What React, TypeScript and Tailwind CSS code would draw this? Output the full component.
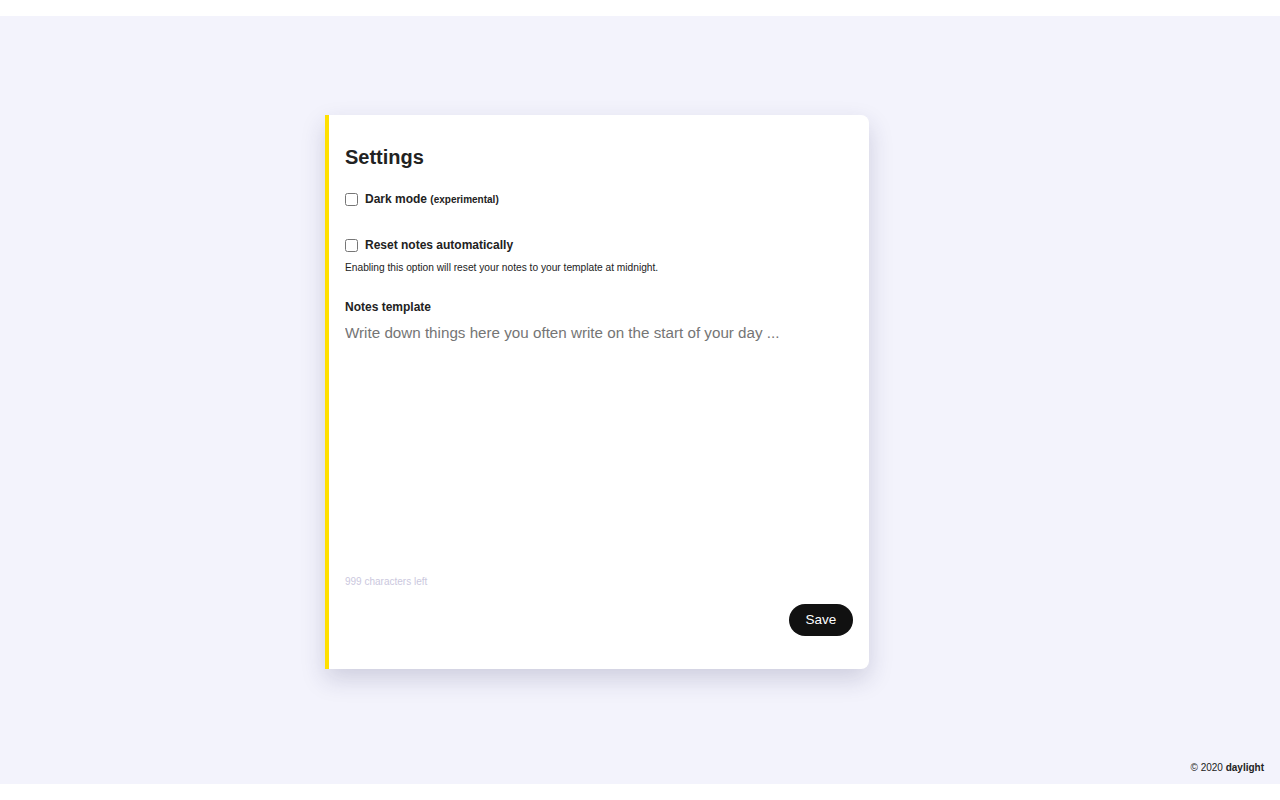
import { useState } from "react";

const MAX = 999;

const App = () => {
    const [dark, setDark] = useState(false);
    const [reset, setReset] = useState(false);
    const [notes, setNotes] = useState("");

    return (
        <div className="w-full bg-white py-4 font-['Liberation_Sans',Arial,sans-serif] text-[#222]">
            <div className="h-[768px] bg-[#f3f3fc] flex flex-col">
                <div className="pt-[99px] pl-[325px]">
                    <div className="w-[544px] h-[554px] bg-white border-l-4 border-[#ffe000] rounded-r-lg shadow-[0_10px_25px_rgba(40,40,90,0.18)] pl-4 pr-4 pt-7 pb-[33px] flex flex-col">
                        <h1 className="text-[20px] leading-7 font-bold">Settings</h1>

                        {/* Options */}
                        <label className="mt-[19px] flex items-center gap-[7px] text-[12px] font-bold">
                            <input
                                type="checkbox"
                                checked={dark}
                                onChange={e => setDark(e.target.checked)}
                                className="w-[13px] h-[13px] m-0"
                            />
                            <span>
                                Dark mode <span className="text-[10px]">(experimental)</span>
                            </span>
                        </label>

                        <label className="mt-[28px] flex items-center gap-[7px] text-[12px] font-bold">
                            <input
                                type="checkbox"
                                checked={reset}
                                onChange={e => setReset(e.target.checked)}
                                className="w-[13px] h-[13px] m-0"
                            />
                            <span>Reset notes automatically</span>
                        </label>
                        <p className="mt-[6px] text-[10.2px]">Enabling this option will reset your notes to your template at midnight.</p>

                        {/* Template */}
                        <h3 className="mt-[23px] text-[12px] font-bold">Notes template</h3>
                        <textarea
                            value={notes}
                            maxLength={MAX}
                            onChange={e => setNotes(e.target.value)}
                            placeholder="Write down things here you often write on the start of your day ..."
                            className="mt-[7px] flex-1 resize-none outline-none text-[15.2px] leading-5 placeholder:text-[#757575]"
                        />
                        <p className="mt-[9px] text-[10px] text-[#cbc8de]">{MAX - notes.length} characters left</p>

                        <div className="mt-[15px] flex justify-end">
                            <button className="w-16 h-8 rounded-full bg-[#111] text-white text-[13.5px]">Save</button>
                        </div>
                    </div>
                </div>
                <footer className="mt-auto pr-4 pb-[9px] text-right text-[10px]">
                    © 2020 <span className="font-bold">daylight</span>
                </footer>
            </div>
        </div>
    );
};

export default App;
